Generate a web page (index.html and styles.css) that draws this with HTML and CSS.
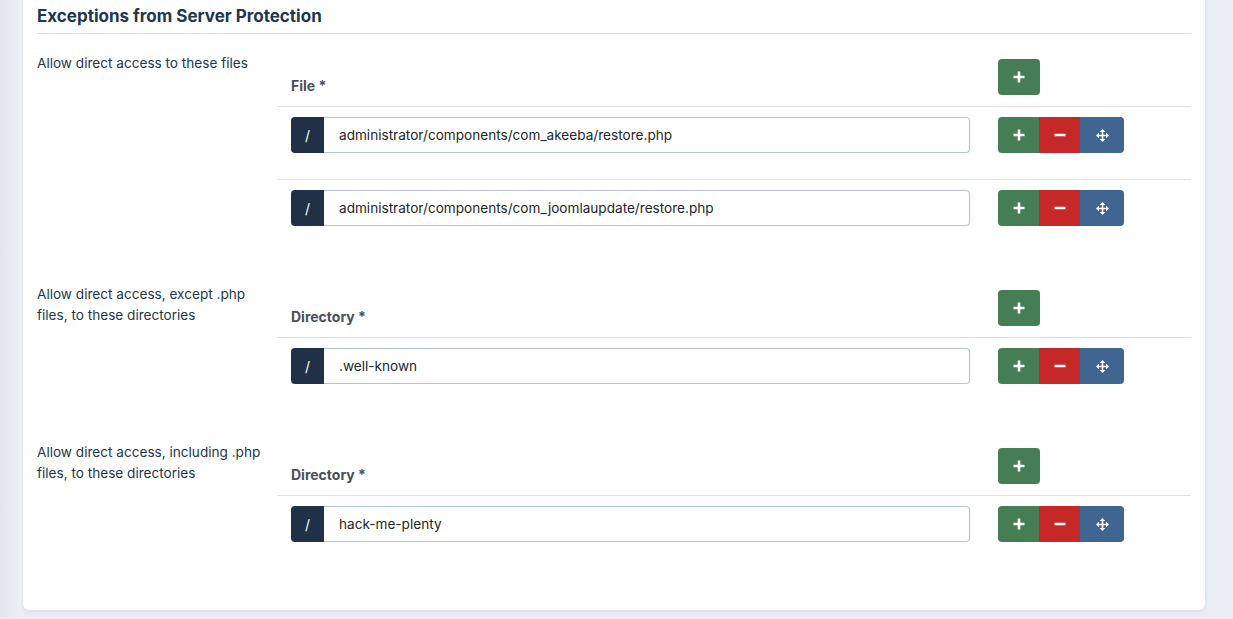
FILE: index.html
```html
<!DOCTYPE html>
<html>
<head>
<meta charset="utf-8">
<link rel="stylesheet" href="styles.css">
</head>
<body>
<div class="page">
  <div class="card">
    <h2 class="card-title">Exceptions from Server Protection</h2>

    <div class="section">
      <div class="label">Allow direct access to these files</div>
      <table class="sub">
        <thead>
          <tr><th class="c-main">File *</th><th class="c-btn"><span class="btn-group"><span class="btn add"><svg viewBox="0 0 12 12"><path d="M6 0.5v11M0.5 6h11"/></svg></span></span></th></tr>
        </thead>
        <tbody>
          <tr>
            <td class="c-main"><div class="input-group"><span class="prefix">/</span><span class="field">administrator/components/com_akeeba/restore.php</span></div></td>
            <td class="c-btn"><span class="btn-group"><span class="btn add"><svg viewBox="0 0 12 12"><path d="M6 0.5v11M0.5 6h11"/></svg></span><span class="btn rem"><svg viewBox="0 0 12 12"><path d="M0.5 6h11"/></svg></span><span class="btn mov"><svg viewBox="0 0 14 14" class="move"><path d="M7 2v10M2 7h10"/><path class="fill" d="M7 0l3 3.2h-6zM7 14l3-3.2h-6zM0 7l3.2-3v6zM14 7l-3.2-3v6z"/></svg></span></span></td>
          </tr>
          <tr>
            <td class="c-main"><div class="input-group"><span class="prefix">/</span><span class="field">administrator/components/com_joomlaupdate/restore.php</span></div></td>
            <td class="c-btn"><span class="btn-group"><span class="btn add"><svg viewBox="0 0 12 12"><path d="M6 0.5v11M0.5 6h11"/></svg></span><span class="btn rem"><svg viewBox="0 0 12 12"><path d="M0.5 6h11"/></svg></span><span class="btn mov"><svg viewBox="0 0 14 14" class="move"><path d="M7 2v10M2 7h10"/><path class="fill" d="M7 0l3 3.2h-6zM7 14l3-3.2h-6zM0 7l3.2-3v6zM14 7l-3.2-3v6z"/></svg></span></span></td>
          </tr>
        </tbody>
      </table>
    </div>

    <div class="section">
      <div class="label">Allow direct access, except .php files, to these directories</div>
      <table class="sub">
        <thead>
          <tr><th class="c-main">Directory *</th><th class="c-btn"><span class="btn-group"><span class="btn add"><svg viewBox="0 0 12 12"><path d="M6 0.5v11M0.5 6h11"/></svg></span></span></th></tr>
        </thead>
        <tbody>
          <tr>
            <td class="c-main"><div class="input-group"><span class="prefix">/</span><span class="field">.well-known</span></div></td>
            <td class="c-btn"><span class="btn-group"><span class="btn add"><svg viewBox="0 0 12 12"><path d="M6 0.5v11M0.5 6h11"/></svg></span><span class="btn rem"><svg viewBox="0 0 12 12"><path d="M0.5 6h11"/></svg></span><span class="btn mov"><svg viewBox="0 0 14 14" class="move"><path d="M7 2v10M2 7h10"/><path class="fill" d="M7 0l3 3.2h-6zM7 14l3-3.2h-6zM0 7l3.2-3v6zM14 7l-3.2-3v6z"/></svg></span></span></td>
          </tr>
        </tbody>
      </table>
    </div>

    <div class="section">
      <div class="label">Allow direct access, including .php files, to these directories</div>
      <table class="sub">
        <thead>
          <tr><th class="c-main">Directory *</th><th class="c-btn"><span class="btn-group"><span class="btn add"><svg viewBox="0 0 12 12"><path d="M6 0.5v11M0.5 6h11"/></svg></span></span></th></tr>
        </thead>
        <tbody>
          <tr>
            <td class="c-main"><div class="input-group"><span class="prefix">/</span><span class="field">hack-me-plenty</span></div></td>
            <td class="c-btn"><span class="btn-group"><span class="btn add"><svg viewBox="0 0 12 12"><path d="M6 0.5v11M0.5 6h11"/></svg></span><span class="btn rem"><svg viewBox="0 0 12 12"><path d="M0.5 6h11"/></svg></span><span class="btn mov"><svg viewBox="0 0 14 14" class="move"><path d="M7 2v10M2 7h10"/><path class="fill" d="M7 0l3 3.2h-6zM7 14l3-3.2h-6zM0 7l3.2-3v6zM14 7l-3.2-3v6z"/></svg></span></span></td>
          </tr>
        </tbody>
      </table>
    </div>
  </div>
</div>
</body>
</html>
```

FILE: styles.css
```css
* { box-sizing: border-box; }
html, body { margin: 0; padding: 0; }
body {
  font-family: Inter, "Noto Sans", "Liberation Sans", sans-serif;
  background: #eaeff5;
  height: 619px;
  overflow: hidden;
}
.page {
  background: linear-gradient(to right, #e2e8f0 0px, #edf1f6 23px, #eaeff5 24px);
  padding: 0 28px 8px 23px;
  min-height: 619px;
}
.card {
  background: #fff;
  margin-top: -10px;
  border-radius: 0 0 6px 6px;
  box-shadow: 0 2px 4px rgba(100, 130, 170, 0.15);
  padding: 14px 14px 42px 14px;
}
.card-title {
  margin: 0 0 14px 0;
  font-size: 17px;
  font-weight: 700;
  color: #22364f;
  line-height: 24px;
  padding-bottom: 5px;
  border-bottom: 1px solid #dfe3e7;
}
.section {
  display: flex;
  margin-bottom: 27px;
}
.section:last-child { margin-bottom: 0; }
.label {
  width: 240px;
  flex: none;
  color: #22364f;
  font-size: 13.6px;
  line-height: 21px;
  padding-top: 5px;
  padding-right: 8px;
}
.sub {
  flex: 1;
  border-collapse: collapse;
}
.sub th, .sub td {
  padding: 10px 14px 26px 14px;
  text-align: left;
}
.sub th {
  padding-top: 11px;
  padding-bottom: 11px;
  vertical-align: bottom;
  color: #495057;
  font-size: 14px;
  font-weight: 700;
  line-height: 18px;
  border-bottom: 1px solid #dfe3e7;
}
.sub tbody tr + tr td { border-top: 1px solid #dfe3e7; }
.sub td { vertical-align: top; }
.c-btn { width: 207px; }
.input-group {
  display: flex;
  height: 36px;
}
.prefix {
  width: 33px;
  flex: none;
  background: #1f3047;
  color: #fff;
  border-radius: 4px 0 0 4px;
  display: flex;
  align-items: center;
  justify-content: center;
  font-size: 14px;
}
.field {
  flex: 1;
  border: 1px solid #b7c4d6;
  border-left: none;
  border-radius: 0 4px 4px 0;
  display: flex;
  align-items: center;
  padding-left: 15px;
  font-size: 13.6px;
  color: #22262a;
}
.btn-group {
  display: inline-flex;
  vertical-align: bottom;
  border-radius: 4px;
  overflow: hidden;
}
.btn {
  height: 36px;
  width: 41px;
  display: flex;
  align-items: center;
  justify-content: center;
}
.add { background: #457d54; }
.rem { background: #c52827; }
.mov { background: #3f6590; width: 44px; }
th .add { width: 42px; }
.btn svg {
  width: 12px;
  height: 12px;
  fill: none;
  stroke: #fff;
  stroke-width: 2.6;
  stroke-linecap: butt;
}
.btn svg.move {
  width: 13px;
  height: 13px;
  stroke-width: 1.8;
}
.btn svg .fill { fill: #fff; stroke: none; }
```
